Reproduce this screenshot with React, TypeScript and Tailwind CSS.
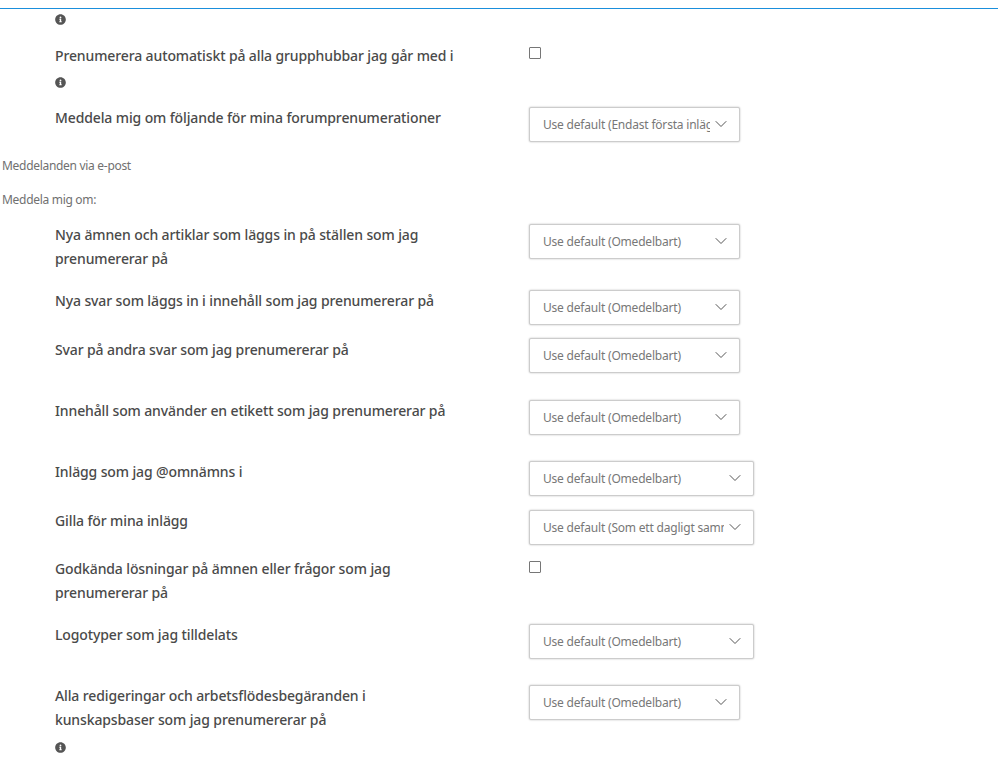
import { FaInfoCircle } from 'react-icons/fa'
import { ChevronDown } from 'lucide-react'

function Info({ className = '' }: { className?: string }) {
  return (
    <div className={`pl-[55px] h-[24px] flex items-center ${className}`}>
      <FaInfoCircle size={11} className="text-[#555]" />
    </div>
  )
}

function Select({ value, wide = false, flush = false }: { value: string; wide?: boolean; flush?: boolean }) {
  return (
    <div className={`relative ${flush ? '' : 'mt-px'} ${wide ? 'w-[225px]' : 'w-[211px]'}`}>
      <select
        defaultValue={value}
        className="w-full h-[35px] appearance-none bg-white border border-[#ccc] rounded-[2px] pl-[13px] pr-[29px] text-[12px] tracking-[-0.2px] text-[#777] shadow-[0_0_2px_#bbb]"
      >
        <option>{value}</option>
      </select>
      <ChevronDown size={20} strokeWidth={1.2} className="absolute right-[9px] top-[7px] text-[#555] pointer-events-none" />
    </div>
  )
}

function Row({ label, children, className = '' }: { label: string; children: React.ReactNode; className?: string }) {
  return (
    <div className={`flex items-start pl-[55px] ${className}`}>
      <div className="w-[474px] pr-[70px] text-[14px] leading-[24px] font-medium tracking-[-0.12px] text-[#4a4a4a]">{label}</div>
      {children}
    </div>
  )
}

function Checkbox({ className = 'mt-1' }: { className?: string }) {
  return <input type="checkbox" className={`appearance-none w-3 h-3 border border-[#767676] rounded-[1px] bg-white ${className}`} />
}

export default function App() {
  return (
    <div className="w-[998px] h-[760px] overflow-hidden bg-white font-['Noto_Sans',sans-serif]">
      <div className="h-[9px] border-b border-[#1a8fdc]" />
      <Info className="mt-[-2px] pt-[1px]" />
      <Row label="Prenumerera automatiskt på alla grupphubbar jag går med i" className="mt-[13px]">
        <Checkbox className="mt-[3px]" />
      </Row>
      <Info className="mt-[2px]" />
      <Row label="Meddela mig om följande för mina forumprenumerationer" className="mt-[12px]">
        <Select value="Use default (Endast första inlägget)" />
      </Row>
      <p className="pl-[2px] mt-[15px] text-[12px] leading-[18px] tracking-[-0.3px] text-[#707070]">Meddelanden via e-post</p>
      <p className="pl-[2px] mt-[16px] text-[12px] leading-[18px] tracking-[-0.3px] text-[#707070]">Meddela mig om:</p>
      <Row label="Nya ämnen och artiklar som läggs in på ställen som jag prenumererar på" className="mt-[14px]">
        <Select value="Use default (Omedelbart)" />
      </Row>
      <Row label="Nya svar som läggs in i innehåll som jag prenumererar på" className="mt-[18px]">
        <Select value="Use default (Omedelbart)" />
      </Row>
      <Row label="Svar på andra svar som jag prenumererar på" className="mt-[13px]">
        <Select value="Use default (Omedelbart)" flush />
      </Row>
      <Row label="Innehåll som använder en etikett som jag prenumererar på" className="mt-[26px]">
        <Select value="Use default (Omedelbart)" />
      </Row>
      <Row label="Inlägg som jag @omnämns i" className="mt-[25px]">
        <Select value="Use default (Omedelbart)" wide />
      </Row>
      <Row label="Gilla för mina inlägg" className="mt-[13px]">
        <Select value="Use default (Som ett dagligt sammandrag)" wide />
      </Row>
      <Row label="Godkända lösningar på ämnen eller frågor som jag prenumererar på" className="mt-[12px]">
        <Checkbox />
      </Row>
      <Row label="Logotyper som jag tilldelats" className="mt-[18px]">
        <Select value="Use default (Omedelbart)" wide />
      </Row>
      <Row label="Alla redigeringar och arbetsflödesbegäranden i kunskapsbaser som jag prenumererar på" className="mt-[25px]">
        <Select value="Use default (Omedelbart)" />
      </Row>
      <Info className="mt-[3px]" />
    </div>
  )
}
